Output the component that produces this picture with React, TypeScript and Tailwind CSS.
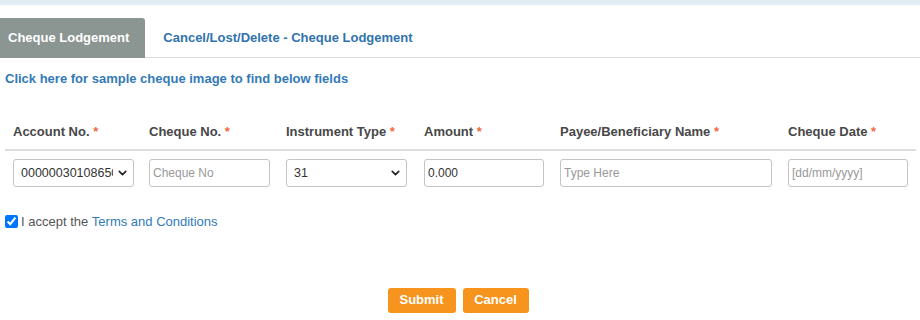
import React from "react";
import { ChevronDown } from "lucide-react";

// Column headers for the lodgement row
const columns = [
  { label: "Account No.", width: "w-[136px]" },
  { label: "Cheque No.", width: "w-[137px]" },
  { label: "Instrument Type", width: "w-[138px]" },
  { label: "Amount", width: "w-[136px]" },
  { label: "Payee/Beneficiary Name", width: "w-[228px]" },
  { label: "Cheque Date", width: "w-[136px]" },
];

const SelectBox = ({ value, width }: { value: string; width: string }) => (
  <div className={`relative h-[28px] ${width}`}>
    <select
      defaultValue={value}
      className="h-full w-full appearance-none overflow-hidden rounded-[3px] border border-[#c4c4c4] bg-white pl-[7px] pr-[20px] text-[12.5px] text-[#333] outline-none"
    >
      <option value={value}>{value}</option>
    </select>
    <ChevronDown
      className="pointer-events-none absolute right-[5px] top-1/2 -translate-y-1/2 text-[#222]"
      size={13}
      strokeWidth={3}
    />
  </div>
);

const TextBox = ({
  placeholder,
  value,
  width,
}: {
  placeholder?: string;
  value?: string;
  width: string;
}) => (
  <input
    type="text"
    defaultValue={value}
    placeholder={placeholder}
    className={`h-[28px] ${width} rounded-[3px] border border-[#c4c4c4] bg-white px-[3px] text-[12px] text-[#333] outline-none placeholder:text-[#999]`}
  />
);

export default function App() {
  return (
    <div className="h-[320px] w-[920px] bg-white font-['Liberation_Sans',Arial,sans-serif]">
      {/* Top strip */}
      <div className="h-[5px] bg-[#e1edf3]" />

      {/* Tabs */}
      <div className="mt-[13px] flex h-[40px] items-stretch border-b border-[#dcdcdc]">
        <div className="-mb-px flex items-center rounded-tr-[3px] bg-[#8b9592] pl-2 pr-4 text-[13px] font-bold text-white">
          Cheque Lodgement
        </div>
        <div className="flex items-center pl-[18px] text-[13px] font-bold text-[#3173ad]">
          Cancel/Lost/Delete - Cheque Lodgement
        </div>
      </div>

      {/* Sample link */}
      <div className="mt-[11px] pl-[5px] text-[13px] font-bold text-[#337ab7]">
        Click here for sample cheque image to find below fields
      </div>

      {/* Lodgement table */}
      <div className="mx-[5px] mt-[33px] w-[911px]">
        <div className="flex border-b-2 border-[#dddddd] pb-[8px]">
          {columns.map((c) => (
            <div key={c.label} className={`${c.width} px-2 text-[13px] font-bold text-[#474747]`}>
              {c.label} <span className="text-[#f26a44]">*</span>
            </div>
          ))}
        </div>
        <div className="flex pt-[8px]">
          <div className="w-[136px] px-2">
            <SelectBox value="000000301086501" width="w-[121px]" />
          </div>
          <div className="w-[137px] px-2">
            <TextBox placeholder="Cheque No" width="w-[121px]" />
          </div>
          <div className="w-[138px] px-2">
            <SelectBox value="31" width="w-[121px]" />
          </div>
          <div className="w-[136px] px-2">
            <TextBox value="0.000" width="w-[120px]" />
          </div>
          <div className="w-[228px] px-2">
            <TextBox placeholder="Type Here" width="w-[212px]" />
          </div>
          <div className="w-[136px] px-2">
            <TextBox placeholder="[dd/mm/yyyy]" width="w-[120px]" />
          </div>
        </div>
      </div>

      {/* Terms */}
      <div className="mt-[25px] flex items-center pl-[5px] text-[13px]">
        <input type="checkbox" defaultChecked className="m-0 mr-[3px] h-[13px] w-[13px] accent-[#0075ff]" />
        <span className="text-[#555]">I accept the&nbsp;</span>
        <span className="text-[#337ab7]">Terms and Conditions</span>
      </div>

      {/* Actions */}
      <div className="mt-[56px] flex justify-center gap-[7px] pr-[4px]">
        <button className="h-[25px] w-[68px] rounded-[3px] bg-[#f7941d] text-[13px] font-bold text-white">
          Submit
        </button>
        <button className="h-[25px] w-[66px] rounded-[3px] bg-[#f7941d] text-[13px] font-bold text-white">
          Cancel
        </button>
      </div>
    </div>
  );
}
